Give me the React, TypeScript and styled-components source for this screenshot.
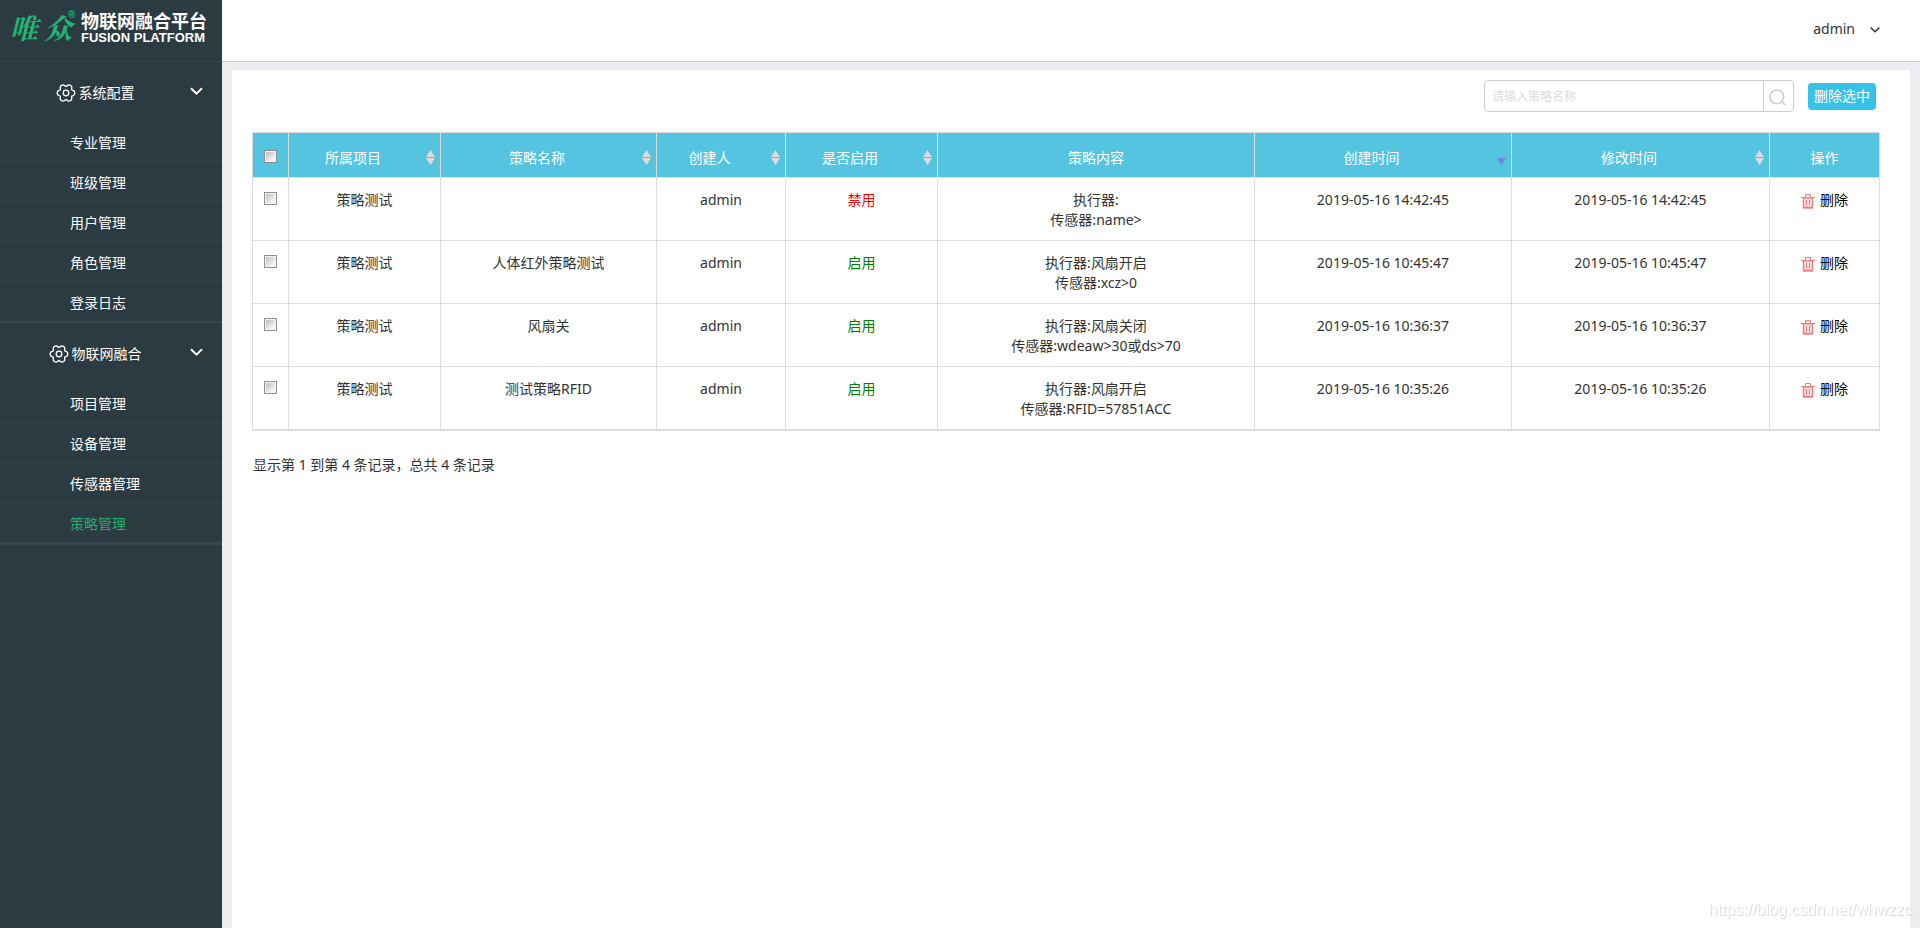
import React from "react";
import styled, { createGlobalStyle } from "styled-components";

const GlobalStyle = createGlobalStyle`
  *, *::before, *::after { box-sizing: border-box; }
  body {
    margin: 0;
    background: #ecedf1;
    color: #333;
    font-family: "Noto Sans", "Noto Sans CJK SC", sans-serif;
    font-size: 14px;
    line-height: 20px;
  }
  button, input { font: inherit; }
  button { padding: 0; border: 0; background: none; color: inherit; cursor: pointer; }
  ul { list-style: none; margin: 0; padding: 0; }
  a { text-decoration: none; color: inherit; }
  svg { display: block; flex: none; }
`;

const Shell = styled.div`
  display: flex;
  min-height: 100vh;
`;

/* ---------- Sidebar ---------- */

const Sidebar = styled.aside`
  flex: none;
  width: 222px;
  background: #2c3a41;
  color: #fff;
`;

const Brand = styled.a`
  display: flex;
  align-items: flex-start;
  height: 62px;
  padding: 10px 0 0 10px;
  border-bottom: 1px solid #37464e;
`;

const BrandMark = styled.span`
  display: flex;
  width: 71px;
  color: #22b573;
  font-family: "Noto Serif CJK SC", "Noto Sans CJK SC", serif;
  font-size: 28px;
  font-style: italic;
  font-weight: 700;
  line-height: 34px;
  gap: 6px;
`;

const BrandReg = styled.sup`
  margin-left: -10px;
  font-family: "Liberation Sans", sans-serif;
  font-size: 10px;
  font-style: normal;
  line-height: 10px;
`;

const BrandName = styled.span`
  display: flex;
  flex-direction: column;
  padding-top: 1px;
  font-family: "Noto Sans CJK SC", sans-serif;
  font-size: 18px;
  font-weight: 700;
  line-height: 18px;
  white-space: nowrap;
`;

const BrandLatin = styled.span`
  font-family: "Liberation Sans", Arial, sans-serif;
  font-size: 13px;
  line-height: 18px;
`;

const Menu = styled.nav`
  border-bottom: 1px solid #37464e;
`;

const MenuGroup = styled.section`
  border-bottom: 1px solid #37464e;
`;

const GroupToggle = styled.button`
  display: flex;
  align-items: center;
  width: 100%;
  height: 60px;
  padding: 0 19px 2px 0;
`;

const GroupLabel = styled.span`
  display: flex;
  flex: 1;
  align-items: center;
  justify-content: center;
  gap: 3px;
  padding-top: 4px;
`;

const MenuItem = styled.li`
  border-bottom: 1px solid #37464e;
`;

const MenuLink = styled.a<{ $active?: boolean }>`
  display: block;
  padding: 11px 0 8px 70px;
  color: ${(p) => (p.$active ? "#23ae6d" : "#fff")};
`;

/* ---------- Main column ---------- */

const Main = styled.div`
  display: flex;
  flex: 1;
  flex-direction: column;
  min-width: 0;
`;

const TopBar = styled.header`
  display: flex;
  align-items: center;
  justify-content: flex-end;
  height: 62px;
  padding: 0 40px 4px 0;
  border-bottom: 1px solid #ccc;
  background: #fff;
`;

const UserButton = styled.button`
  display: flex;
  align-items: center;
  gap: 15px;
  & > svg { margin-top: 3px; }
`;

const Panel = styled.main`
  flex: 1;
  margin: 8px 10px 0;
  padding: 10px 30px 20px 20px;
  background: #fff;
`;

const Toolbar = styled.div`
  display: flex;
  align-items: center;
  justify-content: flex-end;
  gap: 14px;
  padding: 0 4px 20px 0;
`;

const SearchBox = styled.form`
  display: flex;
  width: 310px;
  height: 32px;
  border: 1px solid #ccc;
  border-radius: 4px;
`;

const SearchInput = styled.input`
  flex: 1;
  min-width: 0;
  padding: 2px 7px 0;
  border: 0;
  background: none;
  font-size: 12px;
  outline: none;
  &::placeholder { color: #ddd; opacity: 1; }
`;

const SearchButton = styled.button`
  display: flex;
  align-items: center;
  justify-content: center;
  width: 30px;
  padding: 3px 2px 0 0;
  border-left: 1px solid #ccc;
`;

const DeleteSelected = styled.button`
  height: 27px;
  padding: 0 6px;
  border-radius: 4px;
  background: #35c3e7;
  color: #fff;
`;

/* ---------- Table ---------- */

const TableFrame = styled.div`
  border-bottom: 1px solid #ddd;
`;

const Table = styled.table`
  width: 100%;
  border-collapse: collapse;
  text-align: center;
`;

const Th = styled.th`
  padding: 15px 0 9px;
  border: 1px solid #ddd;
  background: #55c4e0;
  color: #fff;
  font-weight: 400;
`;

const Td = styled.td`
  padding: 12px 0 10px;
  border: 1px solid #ddd;
  vertical-align: top;
`;

const SortButton = styled.button`
  display: flex;
  width: 100%;
  gap: 9px;
  padding-right: 5px;
`;

const SortLabel = styled.span`
  flex: 1;
`;

const Check = styled.input.attrs({ type: "checkbox" })`
  display: block;
  width: 13px;
  height: 13px;
  margin: 2px auto 5px;
  padding: 1px;
  appearance: none;
  border: 1px solid #8e8f8f;
  background:
    linear-gradient(135deg, #b9bfc6, #f4f4f4 80%) content-box,
    linear-gradient(#f4f4f4, #f4f4f4);
  &:checked { background: #3a6ea5 content-box; }
`;

const Status = styled.span<{ $enabled: boolean }>`
  color: ${(p) => (p.$enabled ? "green" : "red")};
`;

const DeleteRow = styled.button`
  display: inline-flex;
  gap: 5px;
  color: #000;
  vertical-align: top;
  & > svg { margin-top: 4px; }
`;

const Summary = styled.p`
  margin: 24px 1px 0;
`;

const Watermark = styled.div`
  position: fixed;
  right: 8px;
  bottom: 8px;
  color: #fff;
  font-family: "Liberation Sans", Arial, sans-serif;
  font-size: 16px;
  text-shadow: 1px 1px 1px #d4d4d4;
  pointer-events: none;
`;

/* ---------- Icons ---------- */

const gearPoints = Array.from({ length: 72 }, (_, i) => {
  const a = (i * Math.PI) / 36;
  const r = 7.9 + 1.1 * Math.cos(6 * a) - 0.25 * Math.cos(12 * a);
  return `${(10 + r * Math.cos(a)).toFixed(2)},${(10 + r * Math.sin(a)).toFixed(2)}`;
}).join(" ");

const GearIcon = () => (
  <svg width="20" height="20" viewBox="0 0 20 20" fill="none" stroke="#fff" strokeWidth="1.3" aria-hidden="true">
    <polygon points={gearPoints} />
    <circle cx="10" cy="10" r="2.8" />
  </svg>
);

const MenuChevron = () => (
  <svg width="13" height="9" viewBox="0 0 13 9" fill="none" stroke="#fff" strokeWidth="2" aria-hidden="true">
    <path d="M1 1.2L6.5 6.7L12 1.2" />
  </svg>
);

const UserChevron = () => (
  <svg width="10" height="6" viewBox="0 0 10 6" fill="none" stroke="#333" strokeWidth="1.4" aria-hidden="true">
    <path d="M.6 .6L5 4.8L9.4 .6" />
  </svg>
);

const SearchIcon = () => (
  <svg width="17" height="17" viewBox="0 0 17 17" fill="none" stroke="#ccc" strokeWidth="1.5" aria-hidden="true">
    <circle cx="7.8" cy="7.8" r="6.9" />
    <path d="M12.4 12.4L16.2 16" />
  </svg>
);

const TrashIcon = () => (
  <svg width="14" height="15" viewBox="0 0 14 15" fill="none" stroke="#ee7b7b" aria-hidden="true">
    <rect x="2.5" y="4" width="9" height="10" fill="#fbe0e0" />
    <path d="M0 3.5H14M4.5 3.5V.5H9.5V3.5M5.5 6V11.5M8.5 6V11.5" />
    <path d="M2.5 4V13.5H11.5V4" strokeWidth="1.4" />
  </svg>
);

const SortIcon = ({ dir }: { dir?: "desc" }) => (
  <svg width="9" height="20" viewBox="0 0 9 20" fill={dir ? "#7d7fdb" : "#dcdcdc"} aria-hidden="true">
    {!dir && <path d="M4.5 2L9 9H0Z" />}
    <path d="M0 10H9L4.5 17Z" />
  </svg>
);

/* ---------- Data ---------- */

const groups = [
  { title: "系统配置", items: ["专业管理", "班级管理", "用户管理", "角色管理", "登录日志"] },
  { title: "物联网融合", items: ["项目管理", "设备管理", "传感器管理", "策略管理"] },
];
const activeItem = "策略管理";

type Column = { title: string; width: number; sortable?: boolean; dir?: "desc" };
const columns: Column[] = [
  { title: "所属项目", width: 152, sortable: true },
  { title: "策略名称", width: 216, sortable: true },
  { title: "创建人", width: 129, sortable: true },
  { title: "是否启用", width: 152, sortable: true },
  { title: "策略内容", width: 317 },
  { title: "创建时间", width: 257, sortable: true, dir: "desc" },
  { title: "修改时间", width: 258, sortable: true },
  { title: "操作", width: 110 },
];

const rows = [
  { name: "", enabled: false, actuator: "", sensor: "name>", time: "2019-05-16 14:42:45" },
  { name: "人体红外策略测试", enabled: true, actuator: "风扇开启", sensor: "xcz>0", time: "2019-05-16 10:45:47" },
  { name: "风扇关", enabled: true, actuator: "风扇关闭", sensor: "wdeaw>30或ds>70", time: "2019-05-16 10:36:37" },
  { name: "测试策略RFID", enabled: true, actuator: "风扇开启", sensor: "RFID=57851ACC", time: "2019-05-16 10:35:26" },
];

export default function App() {
  return (
    <>
      <GlobalStyle />
      <Shell>
        <Sidebar>
          <Brand href="#">
            <BrandMark>
              <span>唯</span>
              <span>众</span>
              <BrandReg>®</BrandReg>
            </BrandMark>
            <BrandName>
              物联网融合平台
              <BrandLatin>FUSION PLATFORM</BrandLatin>
            </BrandName>
          </Brand>
          <Menu>
            {groups.map((group) => (
              <MenuGroup key={group.title}>
                <GroupToggle type="button" aria-expanded="true">
                  <GroupLabel>
                    <GearIcon />
                    {group.title}
                  </GroupLabel>
                  <MenuChevron />
                </GroupToggle>
                <ul>
                  {group.items.map((item) => (
                    <MenuItem key={item}>
                      <MenuLink href="#" $active={item === activeItem}>
                        {item}
                      </MenuLink>
                    </MenuItem>
                  ))}
                </ul>
              </MenuGroup>
            ))}
          </Menu>
        </Sidebar>
        <Main>
          <TopBar>
            <UserButton type="button">
              admin
              <UserChevron />
            </UserButton>
          </TopBar>
          <Panel>
            <Toolbar>
              <SearchBox role="search" onSubmit={(e) => e.preventDefault()}>
                <SearchInput type="text" placeholder="请输入策略名称" aria-label="策略名称" />
                <SearchButton type="submit" aria-label="搜索">
                  <SearchIcon />
                </SearchButton>
              </SearchBox>
              <DeleteSelected type="button">删除选中</DeleteSelected>
            </Toolbar>
            <TableFrame>
              <Table>
                <colgroup>
                  <col width={36} />
                  {columns.map((c) => (
                    <col key={c.title} width={c.width} />
                  ))}
                </colgroup>
                <thead>
                  <tr>
                    <Th scope="col">
                      <Check aria-label="全选" />
                    </Th>
                    {columns.map((c) => (
                      <Th key={c.title} scope="col">
                        {c.sortable ? (
                          <SortButton type="button">
                            <SortLabel>{c.title}</SortLabel>
                            <SortIcon dir={c.dir} />
                          </SortButton>
                        ) : (
                          c.title
                        )}
                      </Th>
                    ))}
                  </tr>
                </thead>
                <tbody>
                  {rows.map((row) => (
                    <tr key={row.time}>
                      <Td>
                        <Check aria-label={`选择 ${row.time}`} />
                      </Td>
                      <Td>策略测试</Td>
                      <Td>{row.name}</Td>
                      <Td>admin</Td>
                      <Td>
                        <Status $enabled={row.enabled}>{row.enabled ? "启用" : "禁用"}</Status>
                      </Td>
                      <Td>
                        执行器:{row.actuator}
                        <br />
                        传感器:{row.sensor}
                      </Td>
                      <Td>{row.time}</Td>
                      <Td>{row.time}</Td>
                      <Td>
                        <DeleteRow type="button">
                          <TrashIcon />
                          删除
                        </DeleteRow>
                      </Td>
                    </tr>
                  ))}
                </tbody>
              </Table>
            </TableFrame>
            <Summary>显示第 1 到第 4 条记录，总共 4 条记录</Summary>
          </Panel>
        </Main>
      </Shell>
      <Watermark>https://blog.csdn.net/whwzzc</Watermark>
    </>
  );
}
